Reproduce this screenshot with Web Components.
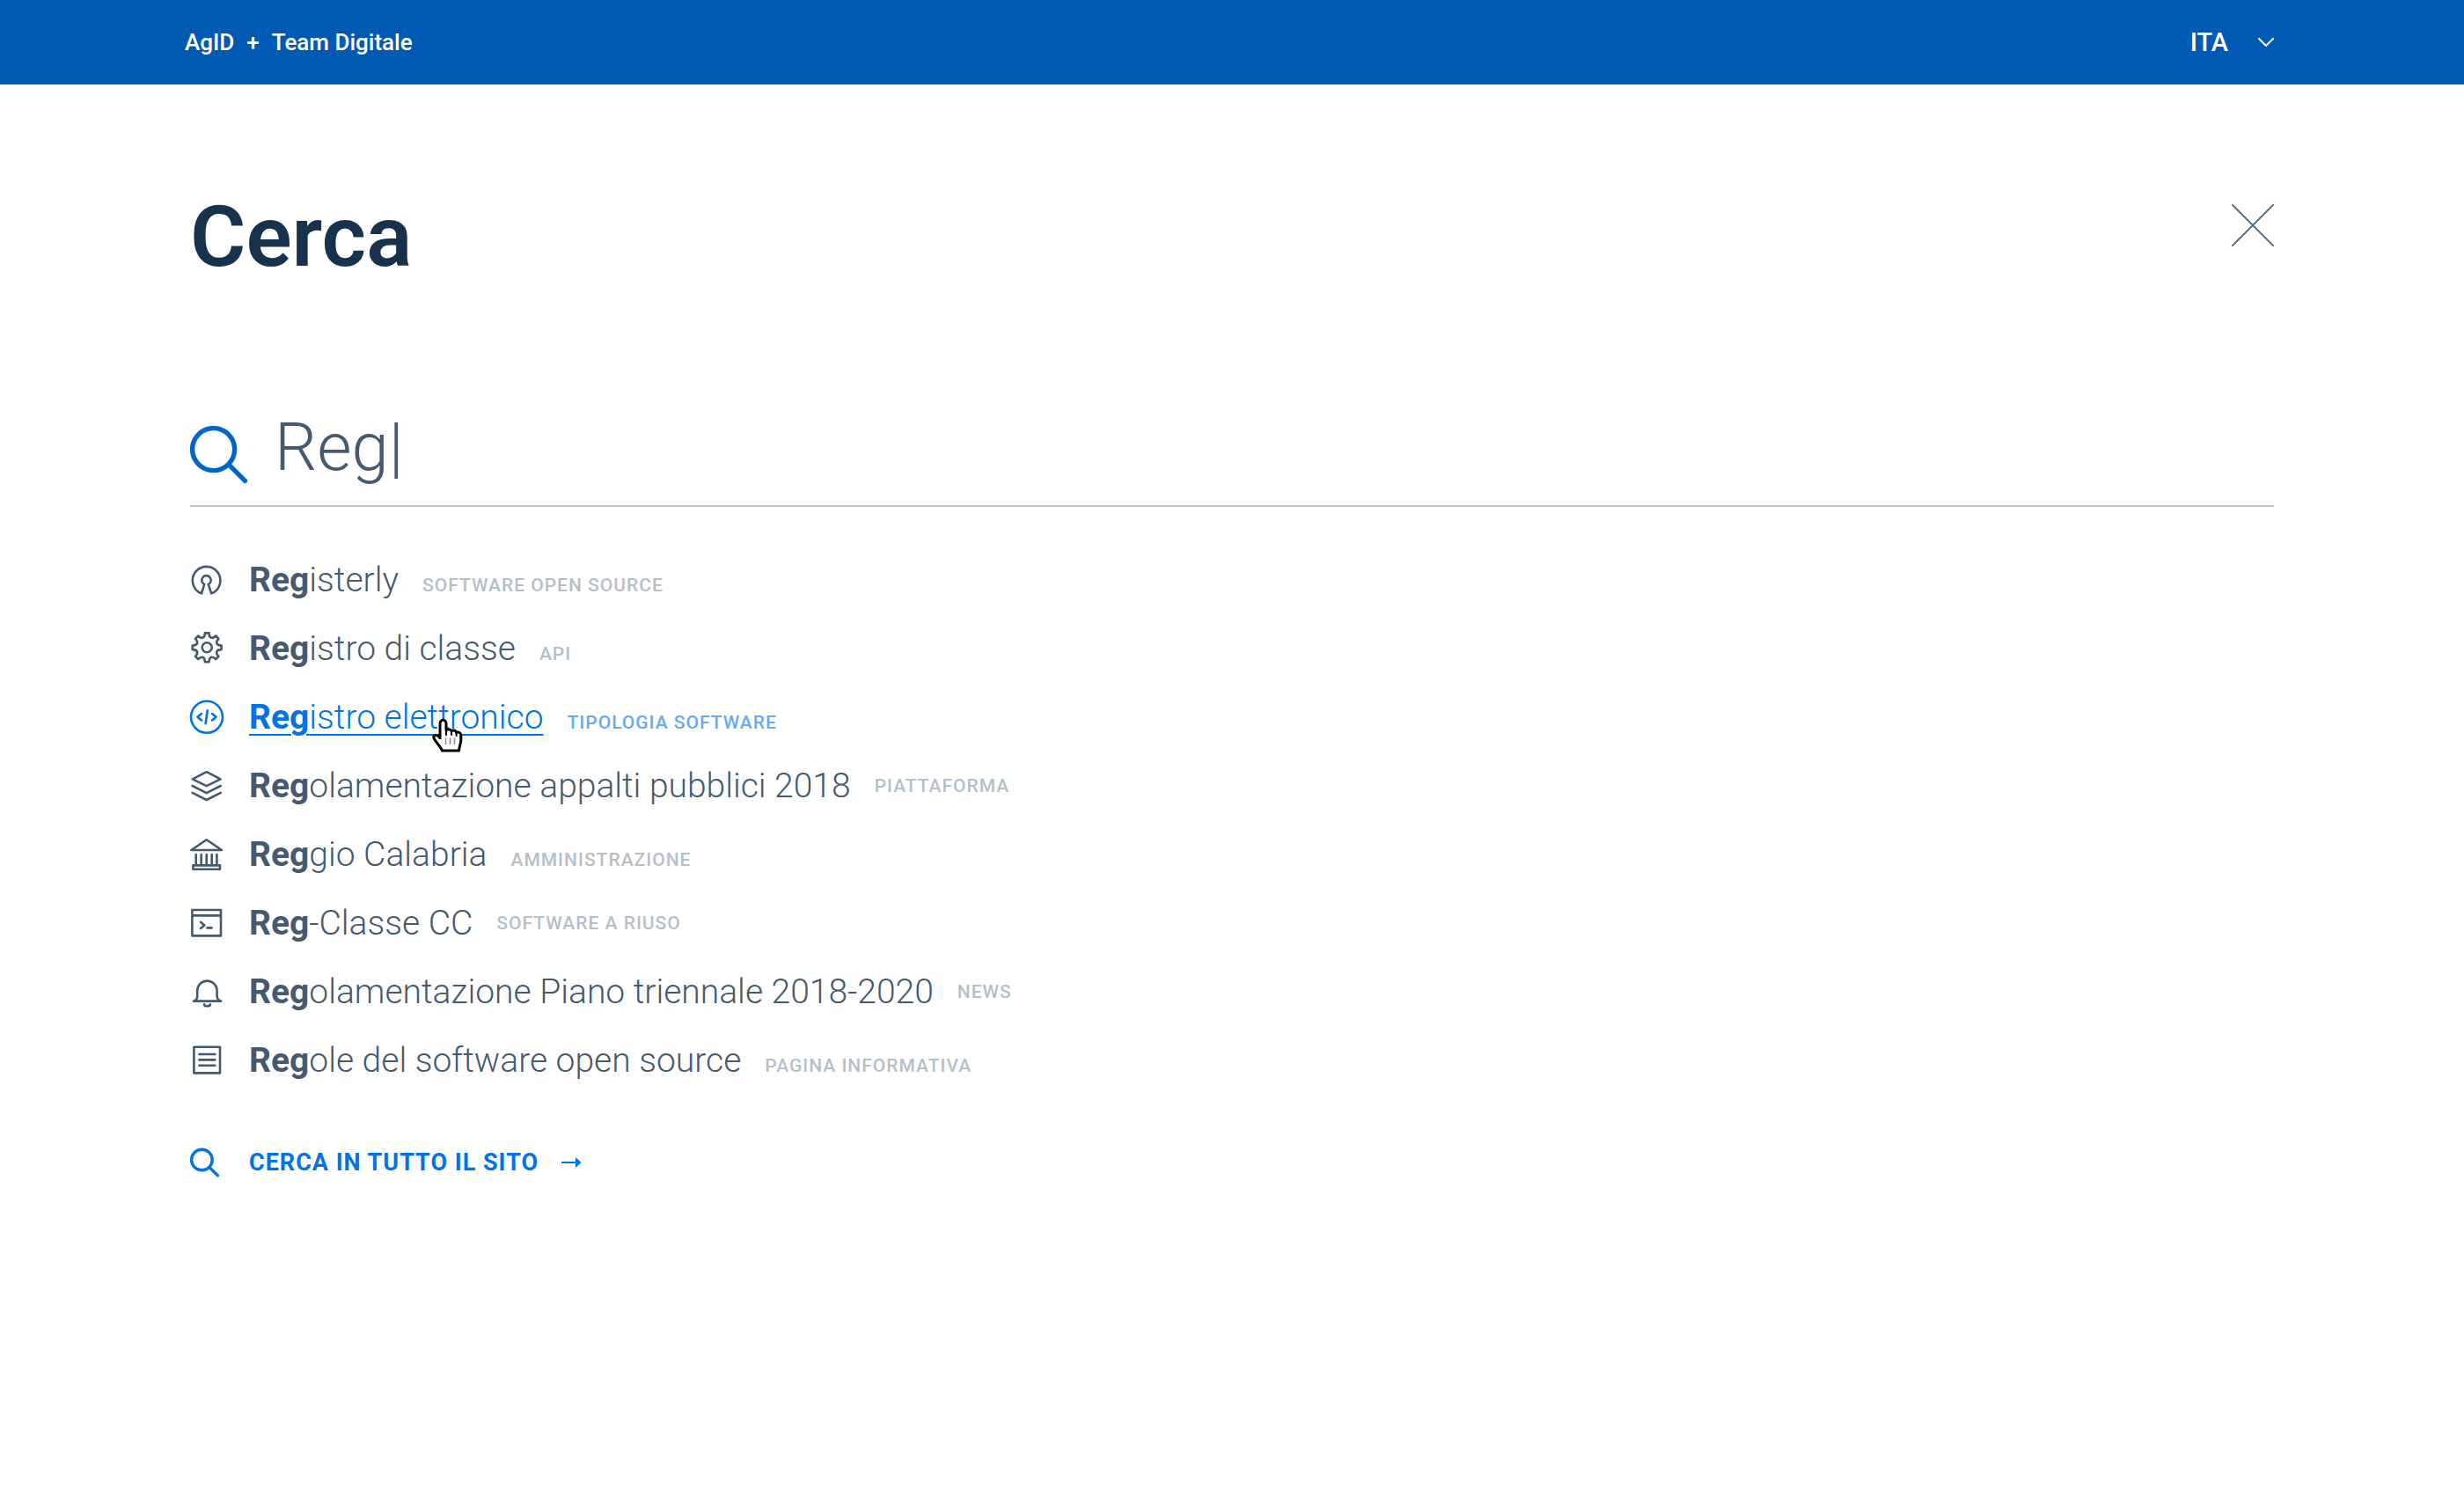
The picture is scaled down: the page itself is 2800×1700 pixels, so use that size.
<!DOCTYPE html>
<html lang="it">
<head>
<meta charset="utf-8">
<title>Cerca</title>
<style>
  html, body { margin: 0; min-height: 100%; background: #fff; }
  body { font-family: Roboto, "Open Sans", sans-serif; color: #455a70; }
</style>
</head>
<body>
<search-page></search-page>

<script>
const define = (name, html, setup) => {
  const template = document.createElement('template');
  template.innerHTML = html;
  customElements.define(name, class extends HTMLElement {
    connectedCallback() {
      if (this.shadowRoot) return;
      const root = this.attachShadow({ mode: 'open' });
      root.append(template.content.cloneNode(true));
      if (setup) setup(this, root);
    }
  });
};

/* Outline of an eight-toothed gear centred on (cx, cy) */
const gearPath = (cx, cy) => {
  const p = (r, deg) => {
    const a = (deg - 90) * Math.PI / 180;
    return (cx + r * Math.cos(a)).toFixed(2) + ' ' + (cy + r * Math.sin(a)).toFixed(2);
  };
  let d = 'M' + p(16.6, -8);
  for (let k = 0; k < 8; k++) {
    const a = k * 45;
    d += 'L' + p(16.6, a + 8) + 'C' + p(10.9, a + 13) + ' ' + p(10.9, a + 32) + ' ' + p(16.6, a + 37);
  }
  return d + 'Z';
};

const ICONS = {
  opensource: '<path d="M13 35.4A15.8 15.8 0 1 1 24.2 35.4L20.8 25A5.2 5.2 0 1 0 16.2 25Z"/>',
  gear: '<path d="' + gearPath(19.2, 18.8) + '"/><circle cx="19.2" cy="18.8" r="5.5"/>',
  code: '<circle cx="19" cy="19.8" r="18"/><path d="M13 16.1L8.4 19.8L13 23.5M25 16.1L29.6 19.8L25 23.5M19.8 12.3L17.6 27.3"/>',
  layers: '<path d="M18.7 4.2L34.6 12.3L18.7 20.2L2.8 12.3ZM2.6 20L18.7 28.2L34.8 20M2.6 27.8L18.7 36L34.8 27.8"/>',
  bank: '<path d="M18.7 3.2L36 15H1.4ZM6.7 20V31.6M12.7 20V31.6M18.7 20V31.6M24.7 20V31.6M30.4 20V31.6M3.4 32.4H34V36.8H3.4Z"/>',
  terminal: '<path d="M2.4 5H35V34.4H2.4ZM2.4 11.4H35M12 18.8L16.4 22.4L12 26M19.4 25.4H24.6"/>',
  bell: '<path d="M4 30.6H35.2M4.6 30.6C7.6 29.4 8.2 27.6 8.2 24.6V18.8A11.2 11.2 0 0 1 30.6 18.8V24.6C30.6 27.6 31.4 29.4 34.4 30.6M16 34.2C16.4 37 22.6 37 23 34.2"/>',
  page: '<path d="M4.4 4.8H34V34.4H4.4ZM10.4 13H28.4M10.4 19.4H28.4M10.4 25.8H28.4"/>',
  search: '<g stroke-width="3.4"><circle cx="13.4" cy="17" r="11.8"/><path d="M21.8 25.4L31.4 34.8"/></g>'
};

define('line-icon', `
  <style>
    :host { display: block; width: 40px; height: 40px; flex: none; }
    svg { display: block; width: 100%; height: 100%; overflow: visible; fill: none;
          stroke: currentColor; stroke-width: 2.6; stroke-linecap: round; stroke-linejoin: round; }
  </style>
  <svg viewBox="0 0 40 40" aria-hidden="true"></svg>`,
  (host, root) => { root.querySelector('svg').innerHTML = ICONS[host.getAttribute('name')]; });

define('top-bar', `
  <style>
    :host { display: flex; justify-content: space-between; align-items: center;
            height: 96px; padding: 0 216px 0 210px; background: #0059b3; color: #fff; font-weight: 500; }
    nav { display: flex; gap: 14px; font-size: 26px; line-height: 32px; }
    a { color: inherit; text-decoration: none; }
    button { display: flex; align-items: center; gap: 34px; padding: 0; border: 0; background: none;
             color: inherit; font: inherit; font-size: 29px; line-height: 32px; }
    svg { width: 18px; height: 10px; fill: none; stroke: currentColor; stroke-width: 2; stroke-linecap: round; }
  </style>
  <nav><a href="#agid">AgID</a><span>+</span><a href="#team">Team Digitale</a></nav>
  <button type="button">ITA<svg viewBox="0 0 18 10" aria-hidden="true"><path d="M1 1L9 9L17 1"/></svg></button>`);

define('page-title', `
  <style>
    :host { display: flex; justify-content: space-between; align-items: flex-start; }
    h1 { margin: 0; font-size: 97px; line-height: 110px; font-weight: 600; color: #17324d; }
    button { margin: 18px 0 0; padding: 0; border: 0; background: none; color: #5c6f82; }
    svg { display: block; width: 48px; height: 48px; fill: none; stroke: currentColor; stroke-width: 2; stroke-linecap: round; }
  </style>
  <h1><slot></slot></h1>
  <button type="button" aria-label="Chiudi"><svg viewBox="0 0 48 48" aria-hidden="true"><path d="M1 1L47 47M47 1L1 47"/></svg></button>`);

define('search-field', `
  <style>
    :host { display: block; }
    label { display: flex; align-items: flex-end; gap: 30px; padding-bottom: 21px; border-bottom: 2px solid #bcc6cf; }
    svg { flex: none; width: 66px; height: 69px; fill: none; stroke: #0066cc; stroke-width: 5.4; stroke-linecap: round; }
    input { flex: 1; min-width: 0; height: 90px; padding: 0; border: 0; outline: 0; background: none;
            font: inherit; font-size: 76px; font-weight: 350; color: inherit; }
  </style>
  <label>
    <svg viewBox="0 0 66 69" aria-hidden="true"><circle cx="26.6" cy="26.6" r="24"/><path d="M44.4 44.4L62.4 62.4"/></svg>
    <input type="text" aria-label="Cerca" value="Reg|">
  </label>`);

define('result-row', `
  <style>
    :host { display: flex; align-items: center; gap: 27px; height: 78px; }
    p { display: flex; align-items: baseline; gap: 27px; margin: 0; }
    :host([lifted]) p { align-items: center; }
    a { position: relative; font-size: 39px; line-height: 48px; font-weight: 350; color: inherit; text-decoration: none; }
    ::slotted(b) { font-weight: 700; }
    small { font-size: 21px; line-height: 24px; font-weight: 500; letter-spacing: 1px; color: #b5bfc9; }
    .hand { display: none; position: absolute; left: 207px; top: 25px; width: 36px; height: 40px; }
    :host([active]) { color: #0073e6; }
    :host([active]) a { text-decoration: underline 2px; text-underline-offset: 6px; }
    :host([active]) small { color: #66abf0; }
    :host([active]) .hand { display: block; }
  </style>
  <p>
    <a href="#"><slot></slot><svg class="hand" viewBox="0 0 36 40" aria-hidden="true">
      <path d="M10 24V6.200C10 1 17 1 17 6.200V14C18.500 12 22 12.200 23 14.800C25 13.200 28 13.800 28.600 16.200C31 15.400 33.800 16.800 33.800 19.600V25C33.800 29 32 31 31.600 37H12.400C11 32.600 7 29.600 3.600 24C1 19.400 5.600 17.200 10 22.400" fill="#fff" stroke="#000" stroke-width="3" stroke-linejoin="round"/>
      <path d="M17 14V19M23 15V19M28.600 16V20" stroke="#000" stroke-width="2" stroke-linecap="round"/>
      <path d="M16.500 22.500V30M21.500 22.500V30M26.500 22.500V30" stroke="#8c8c8c" stroke-width="1.500"/>
    </svg></a>
    <small></small>
  </p>`,
  (host, root) => {
    const icon = document.createElement('line-icon');
    icon.setAttribute('name', host.getAttribute('icon'));
    root.querySelector('p').before(icon);
    root.querySelector('small').textContent = host.getAttribute('kind');
  });

define('search-all', `
  <style>
    :host { display: block; }
    a { display: flex; align-items: center; gap: 27px; width: max-content; height: 78px; color: #0073e6;
        font-size: 27px; line-height: 32px; font-weight: 700; letter-spacing: 1px; text-decoration: none; }
    .label { display: flex; align-items: center; gap: 26px; }
    svg { width: 23px; height: 12px; }
  </style>
  <a href="#tutto"><line-icon name="search"></line-icon><span class="label"><slot></slot>
    <svg viewBox="0 0 23 12" fill="currentColor" aria-hidden="true"><path d="M0 5H16V0L22.500 6L16 12V7H0Z"/></svg></span></a>`);

define('search-page', `
  <style>
    :host { display: block; }
    main { display: flex; flex-direction: column; padding: 118px 216px 0; }
    search-field { margin-top: 139px; }
    section { margin: 44px 0 38px; }
  </style>
  <top-bar></top-bar>
  <main>
    <page-title>Cerca</page-title>
    <search-field></search-field>
    <section>
      <result-row icon="opensource" kind="SOFTWARE OPEN SOURCE"><b>Reg</b>isterly</result-row>
      <result-row icon="gear" kind="API"><b>Reg</b>istro di classe</result-row>
      <result-row active icon="code" kind="TIPOLOGIA SOFTWARE"><b>Reg</b>istro elettronico</result-row>
      <result-row lifted icon="layers" kind="PIATTAFORMA"><b>Reg</b>olamentazione appalti pubblici 2018</result-row>
      <result-row icon="bank" kind="AMMINISTRAZIONE"><b>Reg</b>gio Calabria</result-row>
      <result-row lifted icon="terminal" kind="SOFTWARE A RIUSO"><b>Reg</b>-Classe CC</result-row>
      <result-row lifted icon="bell" kind="NEWS"><b>Reg</b>olamentazione Piano triennale 2018-2020</result-row>
      <result-row icon="page" kind="PAGINA INFORMATIVA"><b>Reg</b>ole del software open source</result-row>
    </section>
    <search-all>CERCA IN TUTTO IL SITO</search-all>
  </main>`);
</script>
</body>
</html>
